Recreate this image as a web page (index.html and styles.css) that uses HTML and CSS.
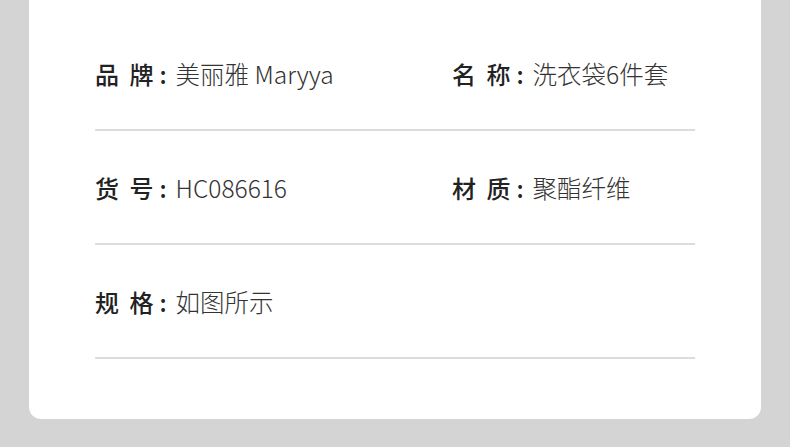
FILE: index.html
```html
<!DOCTYPE html>
<html lang="zh-CN">
<head>
    <meta charset="UTF-8">
    <title>商品参数</title>
    <link rel="stylesheet" href="styles.css">
</head>
<body>
    <div class="paramCard">
        <div class="paramRow">
            <div class="paramItem"><span class="label">品 牌</span><span class="colon">:</span><span class="value">美丽雅 Maryya</span></div>
            <div class="paramItem"><span class="label">名 称</span><span class="colon">:</span><span class="value">洗衣袋6件套</span></div>
        </div>
        <div class="paramRow">
            <div class="paramItem"><span class="label">货 号</span><span class="colon">:</span><span class="value">HC086616</span></div>
            <div class="paramItem"><span class="label">材 质</span><span class="colon">:</span><span class="value">聚酯纤维</span></div>
        </div>
        <div class="paramRow">
            <div class="paramItem"><span class="label">规 格</span><span class="colon">:</span><span class="value">如图所示</span></div>
        </div>
    </div>
</body>
</html>
```

FILE: styles.css
```css
body {
    margin: 0;
    background-color: #d4d4d4;
    font-family: "Noto Sans CJK SC", "Noto Sans", sans-serif;
}
.paramCard {
    background-color: #fff;
    border-radius: 0 0 12px 12px;
    margin: 0 29px;
    padding: 17px 66px 60px 66px;
}
.paramRow {
    display: grid;
    grid-template-columns: 357px 1fr;
    align-items: center;
    height: 112px;
    border-bottom: 2px solid #dcdcdc;
}
.paramItem {
    display: flex;
    align-items: center;
    font-size: 24px;
    line-height: 1;
    padding-top: 2px;
    white-space: pre;
}
.paramItem .label,
.paramItem .colon {
    color: #222;
    font-weight: 500;
}
.paramItem .label {
    word-spacing: 5px;
    margin-right: 6px;
}
.paramItem .colon {
    margin-right: 9px;
}
.paramItem .value {
    color: #333;
    font-weight: 300;
    font-size: 24.5px;
}
```
